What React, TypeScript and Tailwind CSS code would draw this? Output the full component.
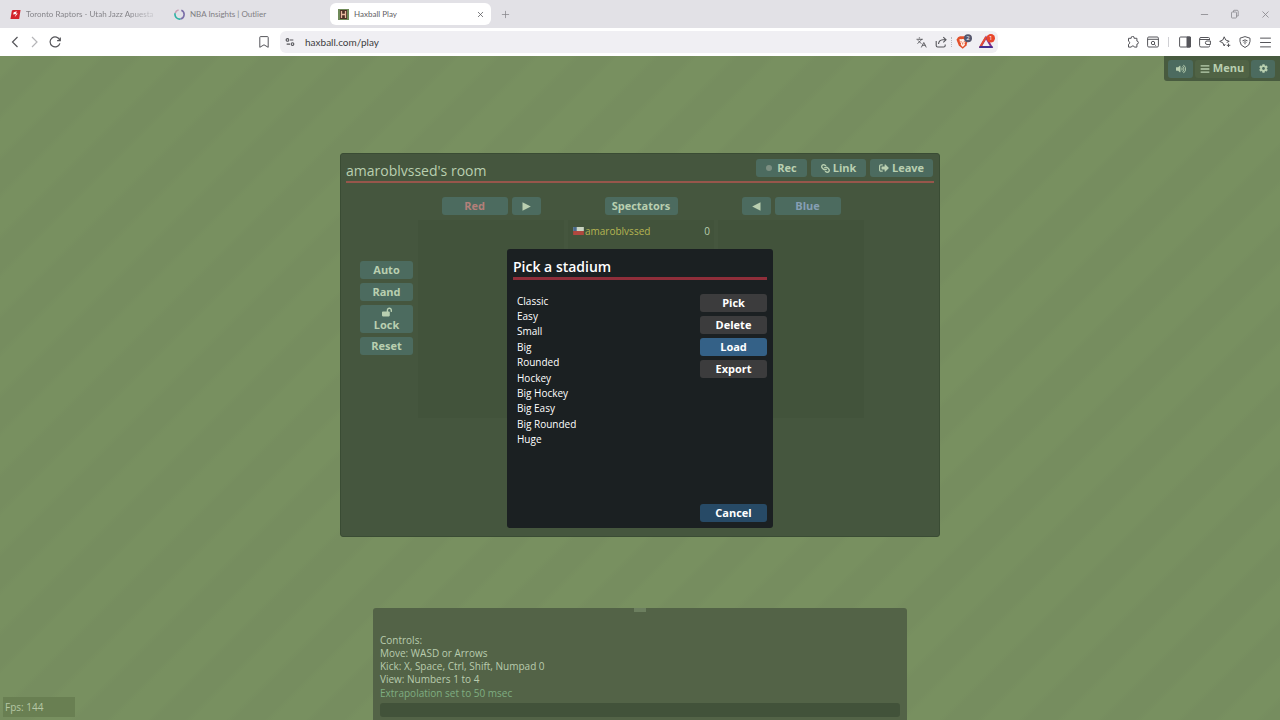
import type { ReactNode } from "react";
import { FaBars, FaCog, FaLink, FaLockOpen, FaSignOutAlt, FaVolumeUp } from "react-icons/fa";
import { Languages, Menu, Plus, X, Minus } from "lucide-react";

const stadiums = ["Classic", "Easy", "Small", "Big", "Rounded", "Hockey", "Big Hockey", "Big Easy", "Big Rounded", "Huge"];

function IconButton({ label, children }: { label: string; children: ReactNode }) {
  return (
    <button type="button" aria-label={label} className="flex size-5 shrink-0 items-center justify-center text-[#55555a]">
      {children}
    </button>
  );
}

function TabBar() {
  return (
    <div className="flex h-7 items-center bg-[#e2e1e6] font-[Lato,sans-serif] text-[8px] text-[#7f7e83]">
      <div className="flex w-[165px] items-center gap-[5px] pl-[10px]">
        <svg viewBox="0 0 12 12" className="size-[11px] shrink-0">
          <path d="M3 1h8.500l-1.500 10H.5L2 2z" fill="#d3232b" />
          <path d="M7.500 2.500 4 3.500 3.500 6l3-.5L5 9l3.500-4H6.500z" fill="#fff" />
        </svg>
        <span className="bg-linear-to-r from-[#7f7e83] from-80% to-[#7f7e83]/20 bg-clip-text whitespace-nowrap text-transparent">
          Toronto Raptors - Utah Jazz Apuesta
        </span>
      </div>
      <div className="flex w-[165px] items-center gap-[5px] pl-[9px]">
        <svg viewBox="0 0 12 12" className="size-[11px] shrink-0" fill="none" strokeWidth="1.800">
          <path d="M8 1.400a5 5 0 0 1-1 9.500" stroke="#7b6fa8" />
          <path d="M7 10.900A5 5 0 0 1 1.300 4.500" stroke="#2fb3a6" />
          <path d="M1.300 4.500A5 5 0 0 1 5 1.100" stroke="#c9a0b4" />
        </svg>
        NBA Insights | Outlier
      </div>
      <div className="flex h-[22px] w-[161px] items-center gap-[5px] rounded-md bg-white pr-[6px] pl-2 text-[#5f5e63]">
        <svg viewBox="0 0 11 11" className="size-[11px] shrink-0">
          <rect width="11" height="11" fill="#6f8a59" />
          <rect x="2" y="1" width="7" height="9" fill="#4c2f26" />
          <path d="M3.500 2v7M7.500 2v7M3.500 5.500h4" stroke="#e9b9a0" strokeWidth="1.300" />
        </svg>
        <span className="grow">Haxball Play</span>
        <button type="button" aria-label="Close tab" className="text-[#55555a]"><X size={9} /></button>
      </div>
      <button type="button" aria-label="New tab" className="ml-[9px]"><Plus size={11} strokeWidth={1.5} /></button>
      <div className="ml-auto flex items-center gap-5 pr-[9px] text-[#88878c]">
        <button type="button" aria-label="Minimize"><Minus size={11} strokeWidth={1.8} /></button>
        <button type="button" aria-label="Restore">
          <svg viewBox="0 0 10 10" className="size-[10px]" fill="none" stroke="currentColor" strokeWidth=".8">
            <rect x="1.500" y="3" width="5" height="6" rx=".8" />
            <path d="M3.500 3V1.800Q3.500 1.300 4 1.300h3.200q1 0 1 1V7H6.500" />
          </svg>
        </button>
        <button type="button" aria-label="Close window"><X size={11} strokeWidth={1.8} /></button>
      </div>
    </div>
  );
}

function Toolbar() {
  return (
    <div className="flex h-7 items-center bg-white">
      <div className="flex w-[280px] items-center pr-[6px] pl-[5px]">
        <IconButton label="Back">
          <svg viewBox="0 0 12 12" className="size-3" fill="none" stroke="currentColor" strokeWidth="1.200"><path d="M8.500 1 3.500 6l5 5" /></svg>
        </IconButton>
        <IconButton label="Forward">
          <svg viewBox="0 0 12 12" className="size-3" fill="none" stroke="#b5b5b8" strokeWidth="1.200"><path d="m3 1 5 5-5 5" /></svg>
        </IconButton>
        <IconButton label="Reload">
          <svg viewBox="0 0 12 12" className="size-3" fill="none" stroke="currentColor" strokeWidth="1.200">
            <path d="M10.900 7.300A5 5 0 1 1 10.800 4.200M11.300 1.500v3.200H8.100" />
          </svg>
        </IconButton>
        <span className="grow" />
        <IconButton label="Bookmark">
          <svg viewBox="0 0 12 12" className="size-3" fill="none" stroke="currentColor" strokeWidth="1">
            <path d="M2.500.6h7q.7 0 .7.7v10L6 8.800l-4.200 2.500v-10q0-.7.7-.7z" />
          </svg>
        </IconButton>
      </div>
      <div className="flex h-[22px] grow items-center rounded-md bg-[#f0eff3] pr-1 text-[10px] text-[#3c3c40]">
        <IconButton label="Site settings">
          <svg viewBox="0 0 12 12" className="size-[10px]" fill="none" stroke="currentColor" strokeWidth="1.300">
            <circle cx="3" cy="3.500" r="1.600" /><path d="M6 3.500h4M2 8.500h4" /><circle cx="9" cy="8.500" r="1.600" />
          </svg>
        </IconButton>
        <input aria-label="Address" defaultValue="haxball.com/play" className="min-w-0 grow pl-[5px] font-[Lato,sans-serif] outline-none" />
        <div className="flex items-center">
          <IconButton label="Translate"><Languages size={11} strokeWidth={2} /></IconButton>
          <IconButton label="Share">
            <svg viewBox="0 0 12 12" className="size-3" fill="none" stroke="currentColor" strokeWidth="1.100">
              <path d="M1.200 5v4.500q0 1.500 1.500 1.500h6q1.500 0 1.500-1.500V8.500M3.500 8q.4-4 4.500-4.200h3M8.300 1.200 11 3.800 8.300 6.400" />
            </svg>
          </IconButton>
          <span className="h-[10px] border-l border-dotted border-[#b8b7bc]" />
          <IconButton label="Brave shields">
            <svg viewBox="0 0 16 16" className="ml-1 size-4 shrink-0">
              <path d="M2 3.200 4 2.300h5l1.800 1.500.7 3.200-1 4.500L6.700 14.800 2.800 11.500.5 5.800z" fill="#e2502a" />
              <path d="m3.500 5 1.800.3L6.700 5l1.500.3L9.800 5l-.3 3-1 1.300.5 1.500-2.300 2.200-2-2.200.3-1.500-1.200-1.500z" fill="#fff1e8" />
              <path d="M4.500 7.500 5.800 8M9 7.500 7.600 8M6.700 8.500v2" stroke="#e2502a" strokeWidth=".8" />
              <circle cx="12" cy="4.200" r="4" fill="#55566c" />
              <text x="12" y="6.300" textAnchor="middle" fontSize="6" fill="#fff">2</text>
            </svg>
          </IconButton>
          <span className="w-[2px]" />
          <IconButton label="Rewards">
            <svg viewBox="0 0 16 16" className="ml-[6px] size-4 shrink-0">
              <path d="M7 3.500 1.500 13h11z" fill="none" stroke="#8b2f86" strokeWidth="2" />
              <path d="M7 3 1.200 13" stroke="#e34b34" strokeWidth="2" />
              <path d="M.5 13h13" stroke="#432f91" strokeWidth="2" />
              <circle cx="11.800" cy="4.200" r="4.200" fill="#e8452c" />
              <text x="11.800" y="6.300" textAnchor="middle" fontSize="6" fill="#fff">1</text>
            </svg>
          </IconButton>
        </div>
      </div>
      <div className="flex w-[282px] items-center justify-end pr-[5px]">
        <IconButton label="Extensions">
          <svg viewBox="0 0 12 12" className="size-3" fill="none" stroke="currentColor">
            <path d="M1.500 2.300h2.700a1.500 1.500 0 1 1 2.900 0h2.800v2.800a1.500 1.500 0 1 1 0 3v3H7.400a1.600 1.600 0 0 0-3.100 0H1.500V8.300a1.600 1.600 0 0 0 0-3.100z" />
          </svg>
        </IconButton>
        <IconButton label="Search page">
          <svg viewBox="0 0 12 12" className="size-3" fill="none" stroke="currentColor">
            <rect x=".6" y="1" width="10.800" height="10" rx="1.200" /><path d="M.6 3.300h10.800M7.300 8.300l1.500 1.300" /><circle cx="6" cy="7" r="1.700" />
          </svg>
        </IconButton>
        <span className="mr-[6px] ml-[5px] h-[10px] border-l border-[#d0d0d4]" />
        <IconButton label="Sidebar">
          <svg viewBox="0 0 12 12" className="size-3" fill="none" stroke="currentColor">
            <rect x=".6" y="1" width="10.800" height="10" rx="1" /><path d="M8 1h3.500v10H8z" fill="currentColor" />
          </svg>
        </IconButton>
        <IconButton label="Wallet">
          <svg viewBox="0 0 12 12" className="size-3" fill="none" stroke="currentColor">
            <path d="M10.500 3.500V2.500Q10.500 1.500 9.500 1.500H2Q.6 1.500.6 2.800V9.500Q.6 11 2 11H9.500q1 0 1-1V9.500M.8 3.500H11M11.400 5H8Q6.400 5 6.400 6.700T8 8.500h3.400z" />
          </svg>
        </IconButton>
        <IconButton label="Leo AI">
          <svg viewBox="0 0 12 12" className="size-3" fill="none" stroke="currentColor">
            <path d="M5.200.8 6.700 4l3.500 1.300-2.500 1.200M5.200.8 3.800 4 .7 5.400l3.100 1.400L5.200 10l1-2M9.500 7.500v3.500M7.800 9.300h3.500" />
          </svg>
        </IconButton>
        <IconButton label="VPN">
          <svg viewBox="0 0 12 12" className="size-3" fill="none" stroke="currentColor">
            <path d="M6 .6 11 2.200v3.300Q11 9.500 6 11.500 1 9.500 1 5.500V2.200z" /><path d="M3.500 4.800q2.500-1.800 5 0M4.500 6.300q1.500-1 3 0M6 7v1.300" />
          </svg>
        </IconButton>
        <IconButton label="Browser menu"><Menu size={15} strokeWidth={1.6} /></IconButton>
      </div>
    </div>
  );
}

function RoomButton({ children, className = "", label }: { children: ReactNode; className?: string; label?: string }) {
  return (
    <button
      type="button"
      aria-label={label}
      className={`flex min-h-[18px] items-center justify-center gap-[3px] rounded-[3px] bg-[#4c6b5f] text-[11px] font-bold ${className}`}
    >
      {children}
    </button>
  );
}

function Triangle({ left = false }: { left?: boolean }) {
  return (
    <svg viewBox="0 0 9 9" className={`size-[9px] ${left ? "rotate-180" : ""}`} fill="currentColor"><path d="M.5.300v8.400L8.800 4.500z" /></svg>
  );
}

function RoomPanel() {
  return (
    <section className="mt-[97px] h-[384px] w-[600px] shrink-0 rounded-[3px] border border-[#3a4c34] bg-[#45563e] p-[5px] text-[#b9cfb0]">
      <header className="box-content flex h-[22px] border-b-2 border-[#97564b]">
        <h1 className="grow pt-[2px] text-[14px] leading-[19px] font-medium">amaroblvssed&apos;s room</h1>
        <div className="flex items-start gap-1 pr-px">
          <RoomButton className="w-[51px] leading-[14px]">
            <span className="mr-[2px] size-[6px] rounded-full bg-[#7d8f82]" />Rec
          </RoomButton>
          <RoomButton className="w-[55px] leading-[14px]"><FaLink size={9} className="rotate-90" />Link</RoomButton>
          <RoomButton className="w-[63px] leading-[14px]"><FaSignOutAlt size={10} />Leave</RoomButton>
        </div>
      </header>
      <div className="flex pt-3 pl-[14px]">
        <div className="flex w-[53px] flex-col gap-1 pt-[66px]">
          <RoomButton className="leading-[14px]">Auto</RoomButton>
          <RoomButton className="leading-[14px]">Rand</RoomButton>
          <RoomButton className="h-[28px] flex-col gap-0 pb-[2px] leading-[9px]"><FaLockOpen size={10} className="shrink-0" />Lock</RoomButton>
          <RoomButton className="leading-[14px]">Reset</RoomButton>
        </div>
        <div className="ml-[5px] grid w-[446px] grid-cols-3 gap-1 pt-[2px]">
          <div className="flex flex-col">
            <div className="flex justify-center gap-1">
              <RoomButton className="w-[66px] leading-[14px] text-[#b3807a]">Red</RoomButton>
              <RoomButton className="w-[29px]" label="Move all to red"><Triangle /></RoomButton>
            </div>
            <div className="mt-[5px] h-[198px] bg-[#42533b]" />
          </div>
          <div className="flex flex-col">
            <RoomButton className="w-[73px] self-center leading-[14px]">Spectators</RoomButton>
            <div className="mt-[5px] flex h-[198px] items-start bg-[#42533b] pt-1 pr-1 pl-[5px] text-[10px] leading-[14px]">
              <svg viewBox="0 0 12 9" className="mt-[3px] h-2 w-[11px]">
                <rect width="12" height="4.500" y="0" fill="#c9d3c2" /><rect width="12" height="4.500" y="4.500" fill="#b0483f" /><rect width="4" height="4.500" fill="#4a6a8c" />
              </svg>
              <span className="ml-px grow text-[#b5b552]">amaroblvssed</span>
              <span>0</span>
            </div>
          </div>
          <div className="flex flex-col">
            <div className="flex justify-center gap-1">
              <RoomButton className="w-[29px]" label="Move all to blue"><Triangle left /></RoomButton>
              <RoomButton className="w-[66px] leading-[14px] text-[#869fb4]">Blue</RoomButton>
            </div>
            <div className="mt-[5px] h-[198px] bg-[#42533b]" />
          </div>
        </div>
      </div>
    </section>
  );
}

function DialogButton({ children, className }: { children: ReactNode; className: string }) {
  return (
    <button type="button" className={`h-[18px] rounded-[3px] text-[11px] leading-[14px] font-bold ${className}`}>
      {children}
    </button>
  );
}

function StadiumDialog() {
  return (
    <div role="dialog" aria-label="Pick a stadium" className="flex h-[279px] w-[266px] flex-col rounded-[3px] bg-[#1b2022] p-[6px] text-white">
      <h2 className="border-b-[3px] border-[#8f2e3a] pt-[2px] pb-px text-[14px] leading-[19px] font-semibold">Pick a stadium</h2>
      <div className="flex grow pt-[14px]">
        <ul className="grid h-[154px] grow auto-rows-fr items-center pl-1 text-[10px] leading-[15px]">
          {stadiums.map((name) => <li key={name}>{name}</li>)}
        </ul>
        <div className="flex w-[67px] flex-col gap-1">
          <DialogButton className="bg-[#3c3c3d]">Pick</DialogButton>
          <DialogButton className="bg-[#3c3c3d]">Delete</DialogButton>
          <DialogButton className="bg-[#346187]">Load</DialogButton>
          <DialogButton className="bg-[#3c3c3d]">Export</DialogButton>
          <DialogButton className="mt-auto bg-[#274a66]">Cancel</DialogButton>
        </div>
      </div>
    </div>
  );
}

function Chat() {
  return (
    <section className="relative mt-auto flex h-[112px] w-[534px] shrink-0 flex-col justify-end rounded-t-[3px] bg-[#536347] px-[7px] pb-[3px] text-[10px] leading-[13px] text-[#b9ccae]">
      <span className="absolute top-0 left-1/2 h-1 w-3 -translate-x-1/2 bg-[#6c7f5f]" />
      <p>Controls:</p>
      <p>Move: WASD or Arrows</p>
      <p>Kick: X, Space, Ctrl, Shift, Numpad 0</p>
      <p>View: Numbers 1 to 4</p>
      <p className="mt-px text-[#7fae81]">Extrapolation set to 50 msec</p>
      <input aria-label="Chat message" className="mt-[3px] h-[14px] w-full rounded-[3px] bg-[#42523a] px-1 outline-none" />
    </section>
  );
}

export default function App() {
  return (
    <div className="flex h-screen flex-col overflow-hidden font-['Open_Sans','Noto_Sans',sans-serif]">
      <TabBar />
      <Toolbar />
      <main className="relative flex grow flex-col items-center bg-[repeating-linear-gradient(135deg,#789060_0px,#789060_13px,#768d5f_19px,#768d5f_40px,#789060_46px,#789060_56px)]">
        <RoomPanel />
        <Chat />
        <div className="absolute inset-0 flex items-center justify-center"><StadiumDialog /></div>
        <div className="absolute top-0 right-0 flex h-[25px] w-[116px] items-center gap-[2px] rounded-bl-[3px] bg-[#485b3f] pl-1 text-[#b9cfb0]">
          <RoomButton className="w-[25px]" label="Toggle sound"><FaVolumeUp size={10} /></RoomButton>
          <button type="button" className="flex h-[18px] w-[54px] items-center justify-center gap-[3px] rounded-[3px] bg-[#506345] text-[11px] font-bold"><FaBars size={10} />Menu</button>
          <RoomButton className="w-[24px]" label="Settings"><FaCog size={9} /></RoomButton>
        </div>
        <div className="absolute bottom-[3px] left-[3px] h-5 w-[72px] bg-[#697f52] px-[2px] text-[10px] leading-5 text-[#b5c7a5]">Fps: 144</div>
      </main>
    </div>
  );
}
